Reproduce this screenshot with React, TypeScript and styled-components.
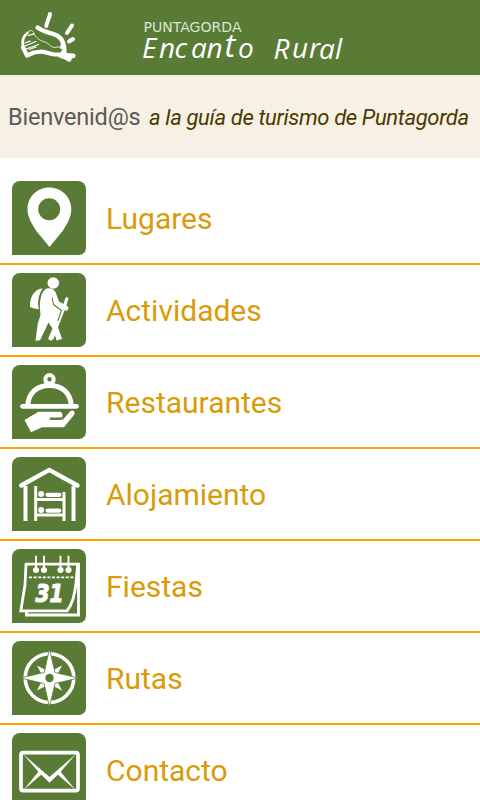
import React from 'react';
import styled, { createGlobalStyle } from 'styled-components';

const GlobalStyle = createGlobalStyle`
  body { margin: 0; background: #fff; overflow: hidden; }
  * { box-sizing: border-box; }
`;

const Screen = styled.div`
  display: flex;
  flex-direction: column;
  width: 480px;
  height: 800px;
  overflow: hidden;
  background: #fff;
  font-family: Roboto, "Liberation Sans", sans-serif;
`;

const Header = styled.header`
  flex: none;
  display: flex;
  height: 75px;
  background: #5a7b36;
`;

const Welcome = styled.section`
  flex: none;
  display: flex;
  align-items: baseline;
  gap: 8px;
  height: 83px;
  padding: 28px 8px 0;
  background: #f7f0e4;
  white-space: nowrap;
  line-height: 28px;
`;

const Greeting = styled.span`
  width: 133px;
  color: #5a5a5a;
  font-size: 23.5px;
  letter-spacing: -0.2px;
`;

const Tagline = styled.em`
  color: #4c3900;
  font-size: 22px;
  letter-spacing: -0.35px;
`;

const Menu = styled.nav`
  display: flex;
  flex-direction: column;
  padding-top: 15px;
`;

const MenuItem = styled.a`
  flex: none;
  display: flex;
  align-items: flex-start;
  gap: 20px;
  height: 92px;
  padding: 8px 12px 0;
  border-bottom: 2px solid #ffa500;
  color: #d99b08;
  text-decoration: none;
`;

const Tile = styled.span`
  flex: none;
  width: 74px;
  height: 74px;
  border-radius: 8px 8px 7px 0;
  background: #5a7b36;
  overflow: hidden;
`;

const Glyph = styled.svg`
  display: block;
  width: 74px;
  height: 74px;
  fill: none;
  stroke: #fff;
  stroke-width: 3;
  stroke-linecap: round;
  stroke-linejoin: round;
`;

const Label = styled.span`
  font-size: 30px;
  line-height: 75px;
`;

const LogoText = styled.text`
  fill: #fff;
  font-family: "Open Sans", sans-serif;
  font-style: italic;
  font-size: 28px;
`;

const TallLetter = styled.tspan`
  font-size: 33px;
`;

const PlaceText = styled.text`
  fill: #dbe4d2;
  font-family: "DejaVu Sans", sans-serif;
  font-weight: 400;
  font-size: 14.4px;
`;

const solid = { fill: '#fff', stroke: 'none' };

const Logo = () => (
  <svg width="480" height="75" viewBox="0 0 480 75" role="img" aria-label="Puntagorda Encanto Rural">
    <g fill="none" stroke="#fff" strokeLinecap="round" strokeLinejoin="round">
      <path d="M50 14C49.5 18 47 21 46.3 26" strokeWidth="4" />
      <path d="M72 25.5 67 33M73 39 69 41.5" strokeWidth="4" />
      <path d="M37.5 27.5C44 32.5 51 32.5 57 35.5 63 39 64.5 44 64.5 52" strokeWidth="4.4" />
      <path d="M59 37C63 40 63 44 61.5 47.5" strokeWidth="3" />
      <path d="M27.5 33C23.5 36 22 41 23 46L26.5 55" strokeWidth="2.8" />
      <path d="M27 33C30 29.5 33 29.5 34 34 37 39 41 41 45 42S50 47.5 55 47.5L61 46.5" strokeWidth="0.8" />
      <path d="M28.5 35.5 34 33.8M25 43 30 41.2M25 46 36 41.5M26 49 38.5 44.5M29 49.5 36 47" strokeWidth="1.3" />
      <path d="M23 47.5 27 55.5 34 52.5 42 51.5 54 54.5 64 54.5" strokeWidth="4.2" />
    </g>
    <path fill="#fff" d="M62 50 66 53 74 53.5Q76.5 55 75 57.5L72 58.5 70.5 61.5Q68 62.5 66 60L58 57Z" />
    <PlaceText x="143.5" y="32" textLength="98" lengthAdjust="spacingAndGlyphs">PUNTAGORDA</PlaceText>
    <LogoText x="142 159 174.5 191 206.5 224.5 238" y="58 58 57.5 58 58 57 57.5">Encan<TallLetter>t</TallLetter>o</LogoText>
    <LogoText x="273.5 292 309 319 335" y="58.5 58 58 58.5 58.5">Rural</LogoText>
  </svg>
);

const PinIcon = () => (
  <Glyph viewBox="0 0 74 74">
    <path {...solid} fillRule="evenodd" d="M37.2 6.5C25 6.5 15.5 16 15.5 28.2 15.5 36 20 43 24 49.5L37.5 66 51 49.5C55 43 59.3 36 59.3 28.2 59.3 16 49.5 6.5 37.2 6.5ZM37.2 17.2A11 11 0 1 1 37.2 39.2 11 11 0 0 1 37.2 17.2Z" />
  </Glyph>
);

const HikerIcon = () => (
  <Glyph viewBox="0 0 74 74">
    <circle {...solid} cx="41.3" cy="10" r="5.8" />
    <path {...solid} d="M30.5 15.5C22 16 17.5 25 18 34Q22 36 27 36.3C25 29 26.5 22 30.5 15.5Z" />
    <path {...solid} d="M33 16.5C36 14 41.5 15 43.5 19L47 28.5 51.3 31 53.2 25.5Q54.8 23 56.5 25.3L54.5 32.5 56.7 34.5 55.5 37.5 52.5 37.5 43 62 41.5 66 39 67.7 36 66 40.5 55.5 36.5 49.5 33 57 28 67.3 23.5 67.7 25.8 50.5 28.5 42 28 36C27.5 28 29 20 33 16.5Z" />
    <path {...solid} d="M37 36H44L46.5 46 46 54 50 66 44.5 67.5 40 52 35 46Z" />
    <path stroke="#5a7b36" strokeWidth="1.1" d="M40.2 25 41.5 31.5 49.5 37.5 46 47.5" />
  </Glyph>
);

const DishIcon = () => (
  <Glyph viewBox="0 0 74 74">
    <circle cx="37.5" cy="14.3" r="4.2" strokeWidth="4" />
    <path strokeWidth="5" strokeLinecap="butt" d="M15.8 41C16 28 25 20.6 37.5 20.6S59 28 59.2 41" />
    <path strokeWidth="4.8" d="M10.5 41.3H64.5" />
    <path {...solid} d="M12.5 55 26.5 46.8H48.5Q51.5 48.5 50 52.5H38V54.5H51L57.5 47Q60 44.5 62 46.3 63.5 48 61.5 50.5L52 62.3H30L19 67.2Z" />
    <path stroke="#5a7b36" strokeWidth="1" d="M38 54.4H48.5Q51 54.5 52 51" />
  </Glyph>
);

const LodgingIcon = () => (
  <Glyph viewBox="0 0 74 74">
    <path strokeWidth="4.4" strokeLinejoin="miter" d="M9.2 28.5 37.3 12.9 65.5 28.5" />
    <path strokeWidth="4" strokeLinecap="butt" d="M13.5 29V64M61.5 29V64" />
    <path strokeWidth="3" strokeLinecap="butt" d="M23.7 29V64M52 35V64M23.5 42.5H52M23.5 58H52" />
    <circle {...solid} cx="29.2" cy="37" r="3" />
    <circle {...solid} cx="29.2" cy="53" r="3" />
    <path strokeWidth="4.2" d="M35.5 37.8H47.3M35.5 53.6H47.3" />
  </Glyph>
);

const DateText = styled.text`
  fill: #fff;
  stroke: #fff;
  stroke-width: 1.2;
  font: italic 700 25px "DejaVu Sans", sans-serif;
`;

const CalendarIcon = () => (
  <Glyph viewBox="0 0 74 74">
    <path strokeWidth="2.8" strokeLinejoin="miter" d="M14 15.2H66.5V66H14.5V62M14 15.2 13 36 8.8 61.8H55C60.5 55 63 45 64 34L65.5 17" />
    <path strokeWidth="1.9" d="M24 7.5V21M32 7.5V21M48.5 7.5V21M56.5 7.5V21" />
    <g {...solid}>
      <circle cx="24" cy="21" r="3" /><circle cx="32" cy="21" r="3" />
      <circle cx="48.5" cy="21" r="3" /><circle cx="56.5" cy="21" r="3" />
    </g>
    <path strokeWidth="1.8" strokeLinecap="butt" strokeDasharray="3 1.6" d="M17 28.3H63" />
    <DateText x="23.5" y="52.8" textLength="28" lengthAdjust="spacingAndGlyphs">31</DateText>
  </Glyph>
);

const CompassIcon = () => (
  <Glyph viewBox="0 0 74 74">
    <circle cx="37.5" cy="37" r="24.3" strokeWidth="3.6" />
    <path {...solid} d="M25 24.5 37.5 31 50 24.5 43.5 37 50 49.5 37.5 43 25 49.5 31.5 37Z" />
    <path fill="#fff" stroke="#5a7b36" strokeWidth=".8" strokeLinejoin="miter" strokeMiterlimit="2" d="M37.5 8 43 31.5 66.5 37 43 42.5 37.5 66 32 42.5 8.5 37 32 31.5Z" />
    <circle cx="37.5" cy="37" r="4.2" fill="#5a7b36" stroke="none" />
  </Glyph>
);

const MailIcon = () => (
  <Glyph viewBox="0 0 74 74">
    <rect x="9" y="19.7" width="57" height="38" rx="2.2" strokeWidth="3.7" />
    <path {...solid} d="M11 21 37.5 44 64 21 48 39.5 37.5 49.8 27 39.5Z" />
    <path {...solid} d="M11.5 57 27 38 30.5 40.5ZM63.5 57 48 38 44.5 40.5Z" />
  </Glyph>
);

const items = [
  { label: 'Lugares', Icon: PinIcon },
  { label: 'Actividades', Icon: HikerIcon },
  { label: 'Restaurantes', Icon: DishIcon },
  { label: 'Alojamiento', Icon: LodgingIcon },
  { label: 'Fiestas', Icon: CalendarIcon },
  { label: 'Rutas', Icon: CompassIcon },
  { label: 'Contacto', Icon: MailIcon },
];

export default function App() {
  return (
    <>
      <GlobalStyle />
      <Screen>
        <Header><Logo /></Header>
        <Welcome>
          <Greeting>Bienvenid@s</Greeting>
          <Tagline>a la guía de turismo de Puntagorda</Tagline>
        </Welcome>
        <Menu>
          {items.map(({ label, Icon }) => (
            <MenuItem key={label}>
              <Tile><Icon /></Tile>
              <Label>{label}</Label>
            </MenuItem>
          ))}
        </Menu>
      </Screen>
    </>
  );
}
